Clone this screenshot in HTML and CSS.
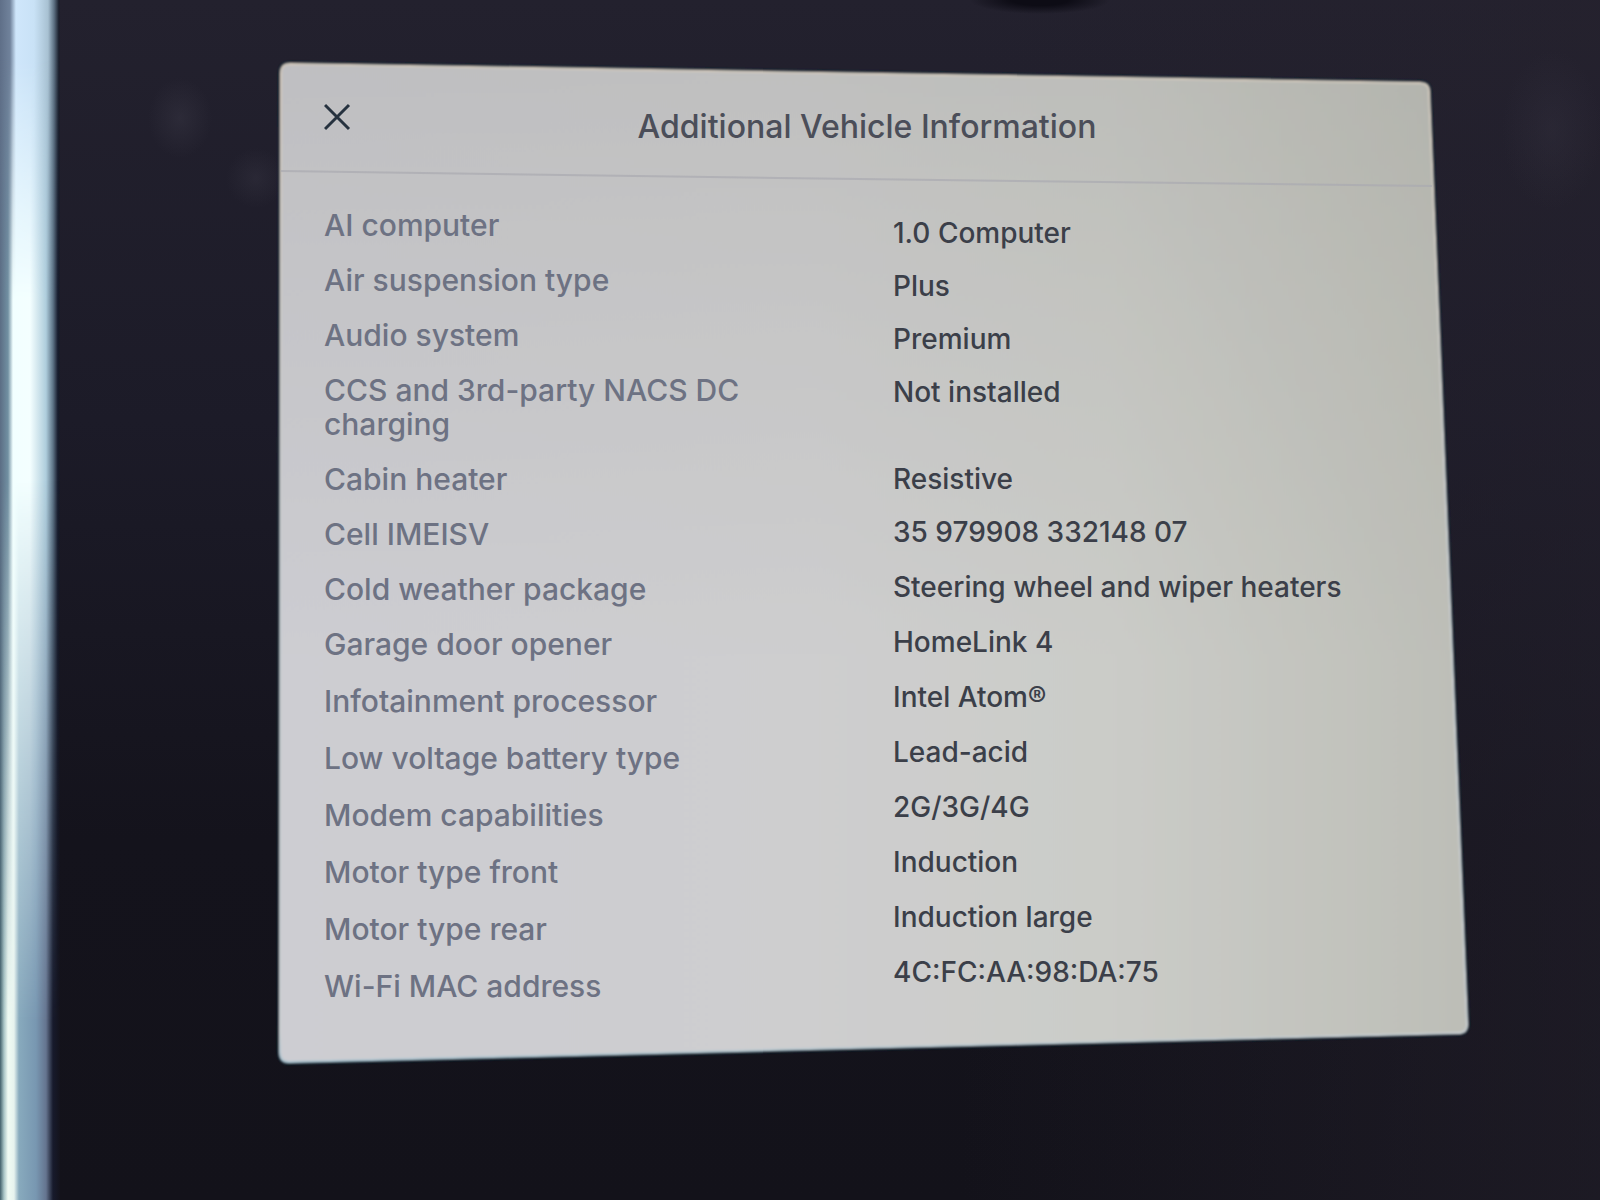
FILE: index.html
```html
<!DOCTYPE html>
<html lang="en">
<head>
<meta charset="utf-8">
<meta name="viewport" content="width=device-width, initial-scale=1">
<title>Additional Vehicle Information</title>
<link rel="stylesheet" href="styles.css">
</head>
<body>
<div class="trim"></div>
<main class="screen">
  <section class="dialog" role="dialog" aria-labelledby="dialog-title">
    <svg class="surface" viewBox="0 0 1192 1004" preserveAspectRatio="none" aria-hidden="true">
      <defs>
        <linearGradient id="across" x1="0" x2="1" y1="0" y2="0">
          <stop offset="0" stop-color="#cdcdd2"/>
          <stop offset="0.45" stop-color="#cececf"/>
          <stop offset="0.7" stop-color="#cbccc8"/>
          <stop offset="1" stop-color="#bdbeb7"/>
        </linearGradient>
        <linearGradient id="down" x1="0" x2="0" y1="0" y2="1">
          <stop offset="0" stop-color="#8c8c86" stop-opacity="0.22"/>
          <stop offset="0.25" stop-color="#8c8c86" stop-opacity="0.12"/>
          <stop offset="0.6" stop-color="#8c8c86" stop-opacity="0"/>
        </linearGradient>
        <linearGradient id="rim" x1="0" x2="0" y1="0" y2="1">
          <stop offset="0" stop-color="#d2c8bb"/>
          <stop offset="0.5" stop-color="#c8cdd0"/>
          <stop offset="0.97" stop-color="#c8cdd0"/>
          <stop offset="1" stop-color="#a9c3d0"/>
        </linearGradient>
        <filter id="soften"><feGaussianBlur stdDeviation="1"/></filter>
      </defs>
      <g filter="url(#soften)">
        <path d="M11 2 L1142 21 Q1151 21 1151 30 L1189 961 Q1190 971 1180 971 L11 1000 Q1 1001 1 990 L2 11 Q2 2 11 2 Z" fill="none" stroke="#15303e" stroke-width="5"/>
        <path d="M11 2 L1142 21 Q1151 21 1151 30 L1189 961 Q1190 971 1180 971 L11 1000 Q1 1001 1 990 L2 11 Q2 2 11 2 Z" fill="url(#across)"/>
        <path d="M11 2 L1142 21 Q1151 21 1151 30 L1189 961 Q1190 971 1180 971 L11 1000 Q1 1001 1 990 L2 11 Q2 2 11 2 Z" fill="url(#down)" stroke="url(#rim)" stroke-width="2"/>
      </g>
      <path d="M2 109 L500 116 L1154 124" fill="none" stroke="#a9aab0" stroke-width="2" opacity="0.7"/>
    </svg>
    <header class="header">
      <button class="close" type="button" aria-label="Close">
        <svg viewBox="0 0 28 28" aria-hidden="true"><path d="M1 2 L25 26 M25 2 L1 26"/></svg>
      </button>
      <h1 id="dialog-title">Additional Vehicle Information</h1>
    </header>
    <table class="specs">
      <tbody>
        <tr><th scope="row">AI computer</th><td>1.0 Computer</td></tr>
        <tr><th scope="row">Air suspension type</th><td>Plus</td></tr>
        <tr><th scope="row">Audio system</th><td>Premium</td></tr>
        <tr class="two-line"><th scope="row">CCS and 3rd-party NACS DC charging</th><td>Not installed</td></tr>
        <tr><th scope="row">Cabin heater</th><td>Resistive</td></tr>
        <tr><th scope="row">Cell IMEISV</th><td>35 979908 332148 07</td></tr>
        <tr><th scope="row">Cold weather package</th><td>Steering wheel and wiper heaters</td></tr>
        <tr><th scope="row">Garage door opener</th><td>HomeLink 4</td></tr>
        <tr><th scope="row">Infotainment processor</th><td>Intel Atom®</td></tr>
        <tr><th scope="row">Low voltage battery type</th><td>Lead-acid</td></tr>
        <tr><th scope="row">Modem capabilities</th><td>2G/3G/4G</td></tr>
        <tr><th scope="row">Motor type front</th><td>Induction</td></tr>
        <tr><th scope="row">Motor type rear</th><td>Induction large</td></tr>
        <tr><th scope="row">Wi-Fi MAC address</th><td>4C:FC:AA:98:DA:75</td></tr>
      </tbody>
    </table>
  </section>
</main>
</body>
</html>
```

FILE: styles.css
```css
* {
  box-sizing: border-box;
}

body {
  margin: 0;
  min-height: 100vh;
  display: flex;
  font-family: Inter, "Liberation Sans", sans-serif;
  font-size: 28px;
  font-weight: 500;
  line-height: 34px;
  color: #3b3f49;
  background:
    radial-gradient(ellipse 70px 14px at 65% 0, #0d0c15 40%, transparent),
    radial-gradient(ellipse 32px 40px at 180px 118px, rgba(70, 68, 82, 0.3), transparent),
    radial-gradient(ellipse 30px 30px at 256px 178px, rgba(70, 68, 82, 0.25), transparent),
    radial-gradient(ellipse 50px 80px at 97% 130px, rgba(60, 58, 72, 0.25), transparent),
    linear-gradient(90deg, transparent 60%, rgba(38, 34, 46, 0.5)),
    linear-gradient(180deg, #23212e 0, #1c1b28 35%, #14131c 70%, #13121a 100%);
}

/* brushed metal edge beside the display */
.trim {
  position: relative;
  flex: 0 0 60px;
  background: linear-gradient(90deg, #5f6f88 0, #70829b 10px, #cfe6fb 16px, #c9e2f6 34px, #a8c1d2 48px, #5d7183 54px, #181c29 59px, transparent 60px);
}

.trim::before,
.trim::after {
  content: "";
  position: absolute;
  inset: 0;
}

.trim::before {
  background: linear-gradient(90deg, #5b6d84 0, #7190a2 8px, #f2ffff 13px, #f4ffff 30px, #aecddc 46px, #5d7487 53px, #15192a 58px, transparent 60px);
  mask-image: linear-gradient(180deg, transparent 5%, #000 25%);
}

.trim::after {
  background: linear-gradient(90deg, #41606a 0, #a9c5c6 4px, #f0fbf3 8px, #e6f2ee 14px, #88aabd 19px, #7897b1 36px, #65748f 46px, #171a2c 53px, #14131c 60px);
  mask-image: linear-gradient(180deg, transparent 40%, #000 85%);
}

.screen {
  flex: 1;
  padding: 62px 130px 134px 219px;
}

.dialog {
  position: relative;
  min-height: 1004px;
  padding-left: 45px;
}

.surface {
  position: absolute;
  inset: 0;
  width: 100%;
  height: 100%;
  overflow: visible;
}

.header {
  position: relative;
  display: grid;
  grid-template-columns: 28px 1fr;
  align-items: center;
  height: 130px;
  padding-right: 88px;
}

.close {
  width: 28px;
  height: 28px;
  margin-bottom: 20px;
  padding: 0;
  border: 0;
  background: none;
  cursor: pointer;
}

.close svg {
  display: block;
  width: 100%;
  height: 100%;
  fill: none;
  stroke: #26323f;
  stroke-width: 3;
}

h1 {
  margin: 0;
  font-size: 32px;
  font-weight: 500;
  text-align: center;
  color: #4b4e59;
}

/* Labels fill the first column and values the second, each at its own pace */
.specs {
  position: relative;
  display: block;
  padding: 16px 8px 0 0;
}

.specs tbody {
  display: flex;
  flex-flow: column wrap;
  align-content: flex-start;
  height: 820px;
}

.specs tr {
  display: contents;
}

.specs th {
  order: 1;
  width: 50%;
  padding: 0 120px 21px 0;
  font-size: 30px;
  font-weight: 500;
  text-align: left;
  color: #6d7283;
}

.specs td {
  order: 2;
  width: 50%;
  padding: 0 0 19px;
}

.specs tr:first-child td {
  margin-top: 8px;
}

.specs .two-line td {
  padding-bottom: 53px;
}

.specs tr:nth-child(n+6) td {
  padding-bottom: 21px;
}

.specs tr:nth-child(n+8) th {
  padding-bottom: 23px;
}
```
